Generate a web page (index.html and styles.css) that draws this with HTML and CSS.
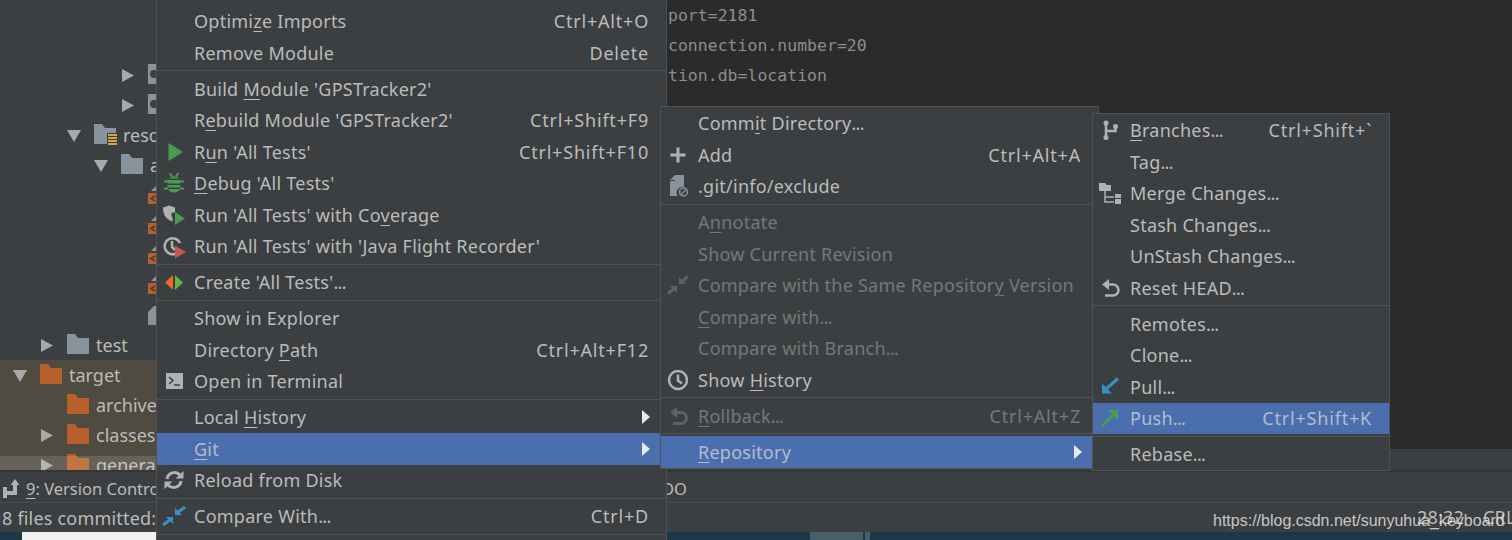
FILE: index.html
```html
<!DOCTYPE html>
<html lang="en">
<head>
<meta charset="utf-8">
<title>Git context menu</title>
<link rel="stylesheet" href="styles.css">
</head>
<body>
<div class="ide">
  <div class="main">
    <div class="tree">
      <div class="node l4"><svg class="arrow"><path d="M1 2v13l12-6.500z"/></svg><svg class="fld"><path class="pkg" d="M0 1h22v20H0z"/><circle class="hole" cx="6" cy="11" r="4"/></svg></div>
      <div class="node l4"><svg class="arrow"><path d="M1 2v13l12-6.500z"/></svg><svg class="fld"><path class="pkg" d="M0 1h22v20H0z"/><circle class="hole" cx="6" cy="11" r="4"/></svg></div>
      <div class="node l2"><svg class="arrow"><path d="M0 3h14L7 15z"/></svg><svg class="fld"><path class="blue" d="M0 1h8l3 4h11v16H0z"/><path class="edge" d="M13 10h11v13H13z"/><path class="res" d="M14 11h9v2h-9zM14 14h9v2h-9zM14 17h9v2h-9zM14 20h9v2h-9z"/></svg><span>resources</span></div>
      <div class="node l3"><svg class="arrow"><path d="M0 3h14L7 15z"/></svg><svg class="fld"><path class="blue" d="M0 1h8l3 4h11v16H0z"/></svg><span>application</span></div>
      <div class="node l5"><svg class="xml"><path class="blue" d="M3 7l6-6v6z"/><path class="orange" d="M0 9h8v11H0z"/><path class="mark" d="M7 12l-4 2.500L7 17"/></svg></div>
      <div class="node l5"><svg class="xml"><path class="blue" d="M3 7l6-6v6z"/><path class="orange" d="M0 9h8v11H0z"/><path class="mark" d="M7 12l-4 2.500L7 17"/></svg></div>
      <div class="node l5"><svg class="xml"><path class="blue" d="M3 7l6-6v6z"/><path class="orange" d="M0 9h8v11H0z"/><path class="mark" d="M7 12l-4 2.500L7 17"/></svg></div>
      <div class="node l5"><svg class="xml"><path class="blue" d="M3 7l6-6v6z"/><path class="orange" d="M0 9h8v11H0z"/><path class="mark" d="M7 12l-4 2.500L7 17"/></svg></div>
      <div class="node l5"><svg class="xml"><path class="blue" d="M0 8l6-6h4v19H0z"/></svg></div>
      <div class="node l1"><svg class="arrow"><path d="M1 2v13l12-6.500z"/></svg><svg class="fld"><path class="blue" d="M0 1h8l3 4h11v16H0z"/></svg><span>test</span></div>
      <div class="node l0 ignored"><svg class="arrow"><path d="M0 3h14L7 15z"/></svg><svg class="fld"><path class="orange" d="M0 1h8l3 4h11v16H0z"/></svg><span>target</span></div>
      <div class="node l1 ignored"><span class="arrow-gap"></span><svg class="fld"><path class="orange" d="M0 1h8l3 4h11v16H0z"/></svg><span>archive-tmp</span></div>
      <div class="node l1 ignored"><svg class="arrow"><path d="M1 2v13l12-6.500z"/></svg><svg class="fld"><path class="orange" d="M0 1h8l3 4h11v16H0z"/></svg><span>classes</span></div>
      <div class="node l1 ignored"><svg class="arrow"><path d="M1 2v13l12-6.500z"/></svg><svg class="fld"><path class="orange" d="M0 1h8l3 4h11v16H0z"/></svg><span>generated</span></div>
      <div class="fade"></div>
    </div>
    <div class="right">
      <div class="editor">
        <div class="code">port=2181</div>
        <div class="code">connection.number=20</div>
        <div class="code">tion.db=location</div>
      </div>
      <div class="editor-foot"></div>
    </div>
  </div>
  <div class="toolbar">
    <div class="tab first"><svg class="tab-icon" viewBox="0 0 18 20"><path d="M1 9h4v11H1zM5 13h6V7H8.500L13 1l4.500 6H15v10H5z"/></svg><span><u>9</u>: Version Control</span></div>
    <div class="tab"><span>6: TODO</span></div>
  </div>
  <div class="status">
    <span class="status-msg">8 files committed: update</span>
    <span class="status-pos">28:32</span>
    <span class="status-crlf">CRLF</span>
  </div>
  <div class="taskbar">
    <span class="tb-a"></span><span class="tb-white"></span><span class="tb-b"></span><span class="tb-thumb"></span><span class="tb-c"></span><span class="tb-thumb2"></span><span class="tb-d"></span>
  </div>

  <div class="menu m1">
    <div class="row"><span class="ic"></span><span class="lbl">Optimi<u>z</u>e Imports</span><span class="key">Ctrl+Alt+O</span></div>
    <div class="row"><span class="ic"></span><span class="lbl">Remove Module</span><span class="key">Delete</span></div>
    <div class="sep"></div>
    <div class="row"><span class="ic"></span><span class="lbl">Build <u>M</u>odule 'GPSTracker2'</span></div>
    <div class="row"><span class="ic"></span><span class="lbl">R<u>e</u>build Module 'GPSTracker2'</span><span class="key">Ctrl+Shift+F9</span></div>
    <div class="row"><span class="ic"><svg viewBox="0 0 20 20"><path class="g" d="M4.500 1v18L19 10z"/></svg></span><span class="lbl">R<u>u</u>n 'All Tests'</span><span class="key">Ctrl+Shift+F10</span></div>
    <div class="row"><span class="ic"><svg viewBox="0 0 20 20"><path class="g" d="M5.500 5.500C6.500 2.500 13.500 2.500 14.500 5.500zM3.500 7h13v3.500h-13zM3.500 12h13v2.500h-13zM4 16h12c-1.500 4.500-10.500 4.500-12 0z"/><path class="gs" d="M5.500 0l2.500 3.500M14.500 0L12 3.500M0 8.500h4M16 8.500h4M0 15.500h4M16 15.500h4"/></svg></span><span class="lbl"><u>D</u>ebug 'All Tests'</span></div>
    <div class="row"><span class="ic"><svg viewBox="0 0 20 20"><path class="gr" d="M-1 2.500L5 .500l6 2v5H8.500c-1.500 1-1.500 4 0 5V16.500c-6-2-9.500-6-9.500-14z"/><path class="g" d="M11 7l10 6.500L11 20z"/></svg></span><span class="lbl">Run 'All Tests' with Co<u>v</u>erage</span></div>
    <div class="row"><span class="ic"><svg viewBox="0 0 20 20"><path class="st" d="M12 17.500A8 8 0 1 1 16 7M8 5v6l3 3"/><path class="r" d="M11 9.500l11 6.500-11 6.500z"/></svg></span><span class="lbl">Run 'All Tests' with 'Java Flight Recorder'</span></div>
    <div class="sep"></div>
    <div class="row"><span class="ic"><svg viewBox="0 0 20 20"><path class="o" d="M9 3L1 10.500 9 18z"/><path class="lg" d="M11 3l8 7.500L11 18z"/></svg></span><span class="lbl">Create 'All Tests'<span class="d">...</span></span></div>
    <div class="sep"></div>
    <div class="row"><span class="ic"></span><span class="lbl">Show in Explorer</span></div>
    <div class="row"><span class="ic"></span><span class="lbl">Directory <u>P</u>ath</span><span class="key">Ctrl+Alt+F12</span></div>
    <div class="row"><span class="ic"><svg viewBox="0 0 20 20"><path class="gr" d="M2 2h17v16H2z"/><path class="dk" d="M5 6l4 3.500L5 13M10 14h6"/></svg></span><span class="lbl">Open in Terminal</span></div>
    <div class="sep"></div>
    <div class="row"><span class="ic"></span><span class="lbl">Local <u>H</u>istory</span><svg class="sub" viewBox="0 0 8 14"><path d="M0 0l8 7-8 7z"/></svg></div>
    <div class="row sel"><span class="ic"></span><span class="lbl"><u>G</u>it</span><svg class="sub" viewBox="0 0 8 14"><path d="M0 0l8 7-8 7z"/></svg></div>
    <div class="row"><span class="ic"><svg viewBox="0 0 20 20"><path class="st3" d="M3 9a7.500 7.500 0 0 1 13-4M17 11a7.500 7.500 0 0 1-13 4"/><path class="gr" d="M11.500 8.500h8V1zM8.500 11.500h-8V19z"/></svg></span><span class="lbl">Reload from Disk</span></div>
    <div class="sep"></div>
    <div class="row"><span class="ic"><svg viewBox="0 0 20 20"><path class="b" d="M11 9V2l7 7z"/><path class="bs" d="M13.500 6.500L21 1"/><path class="b" d="M9 11v7l-7-7z"/><path class="bs" d="M6.500 13.500L-1 19"/></svg></span><span class="lbl">Compare With<span class="d">...</span></span><span class="key">Ctrl+D</span></div>
    <div class="sep"></div>
  </div>

  <div class="menu m2">
    <div class="row"><span class="ic"></span><span class="lbl">Comm<u>i</u>t Directory<span class="d">...</span></span></div>
    <div class="row"><span class="ic"><svg viewBox="0 0 20 20"><path class="plus" d="M10 2.500v15M2.500 10h15"/></svg></span><span class="lbl">Add</span><span class="key">Ctrl+Alt+A</span></div>
    <div class="row"><span class="ic"><svg viewBox="0 0 20 20"><path class="fl" d="M7 -1h9v12a6 6 0 0 0-6.500 9H2V5h5zM2 4l5-5v5z"/><circle class="no" cx="15.500" cy="16" r="4"/><path class="no" d="M13 18.500l5-5"/></svg></span><span class="lbl">.git/info/exclude</span></div>
    <div class="sep"></div>
    <div class="row off"><span class="ic"></span><span class="lbl">A<u>n</u>notate</span></div>
    <div class="row off"><span class="ic"></span><span class="lbl">Show Current Revision</span></div>
    <div class="row off"><span class="ic"><svg viewBox="0 0 20 20"><path class="dg" d="M11 9V2l7 7z"/><path class="dgs" d="M13.500 6.500L20 1.500"/><path class="dg" d="M9 11v7l-7-7z"/><path class="dgs" d="M6.500 13.500L0 18.500"/></svg></span><span class="lbl">Compare with the Same Repositor<u>y</u> Version</span></div>
    <div class="row off"><span class="ic"></span><span class="lbl"><u>C</u>ompare with<span class="d">...</span></span></div>
    <div class="row off"><span class="ic"></span><span class="lbl">Compare with Branch<span class="d">...</span></span></div>
    <div class="row"><span class="ic"><svg viewBox="0 0 20 20"><circle class="st" cx="10" cy="10" r="9"/><path class="st" d="M10 4.500V10.500l4 3"/></svg></span><span class="lbl">Show <u>H</u>istory</span></div>
    <div class="sep"></div>
    <div class="row off"><span class="ic"><svg viewBox="0 0 20 20"><path class="dg" d="M2 6.500L9 1v11z"/><path class="dgs" d="M8 6.500h5a5.500 5.500 0 0 1 0 11H5"/></svg></span><span class="lbl"><u>R</u>ollback<span class="d">...</span></span><span class="key">Ctrl+Alt+Z</span></div>
    <div class="sep"></div>
    <div class="row sel"><span class="ic"></span><span class="lbl"><u>R</u>epository</span><svg class="sub" viewBox="0 0 8 14"><path d="M0 0l8 7-8 7z"/></svg></div>
  </div>

  <div class="menu m3">
    <div class="row"><span class="ic"><svg viewBox="0 0 20 20"><circle class="gr" cx="6" cy="3" r="2.500"/><circle class="gr" cx="6" cy="17.500" r="2.500"/><circle class="gr" cx="15.500" cy="6.500" r="2.500"/><path class="st" d="M6 3v14M15.500 7v4H6"/></svg></span><span class="lbl"><u>B</u>ranches<span class="d">...</span></span><span class="key">Ctrl+Shift+`</span></div>
    <div class="row"><span class="ic"></span><span class="lbl">Tag<span class="d">...</span></span></div>
    <div class="row"><span class="ic"><svg viewBox="0 0 20 20"><path class="gr" d="M-1 0h6l2 2h4v6H-1z"/><path class="thin" d="M5 8v11h9M5 14h9"/><path class="gr" d="M15 11h6v4h-6zM15 16h6v5h-6z"/></svg></span><span class="lbl">Merge Changes<span class="d">...</span></span></div>
    <div class="row"><span class="ic"></span><span class="lbl">Stash Changes<span class="d">...</span></span></div>
    <div class="row"><span class="ic"></span><span class="lbl">UnStash Changes<span class="d">...</span></span></div>
    <div class="row"><span class="ic"><svg viewBox="0 0 20 20"><path class="gr" d="M2 6.500L9 1v11z"/><path class="st" d="M8 6.500h5a5.500 5.500 0 0 1 0 11H5"/></svg></span><span class="lbl">Reset HEAD<span class="d">...</span></span></div>
    <div class="sep"></div>
    <div class="row"><span class="ic"></span><span class="lbl">Remotes<span class="d">...</span></span></div>
    <div class="row"><span class="ic"></span><span class="lbl">Clone<span class="d">...</span></span></div>
    <div class="row"><span class="ic"><svg viewBox="0 0 20 20"><path class="b" d="M2 16.500V6.500l10 10z"/><path class="bs" d="M6 12L18 1.500"/></svg></span><span class="lbl">Pull<span class="d">...</span></span></div>
    <div class="row sel"><span class="ic"><svg viewBox="0 0 20 20"><path class="g" d="M18 2v10L8 2z"/><path class="gs2" d="M14 6.500L2 18"/></svg></span><span class="lbl">Push<span class="d">...</span></span><span class="key">Ctrl+Shift+K</span></div>
    <div class="sep"></div>
    <div class="row"><span class="ic"></span><span class="lbl">Rebase<span class="d">...</span></span></div>
  </div>

  <div class="watermark">https://blog.csdn.net/sunyuhua_keyboard</div>
</div>
</body>
</html>
```

FILE: styles.css
```css
* { box-sizing: border-box; }
html, body { margin: 0; padding: 0; }
body { background: #3c3f41; overflow: hidden; }
u { text-underline-offset: 3px; text-decoration-thickness: 1px; }

.ide {
  position: relative;
  width: 1512px;
  height: 540px;
  overflow: hidden;
  display: flex;
  flex-direction: column;
  background: #3c3f41;
  color: #bbbbbb;
  font-family: "Noto Sans", "Open Sans", sans-serif;
  font-size: 18px;
}

.main { display: flex; height: 470px; flex: none; }

.tree {
  position: relative;
  width: 666px;
  flex: none;
  padding-top: 60px;
  overflow: hidden;
  background: #3c3f41;
}
.node { height: 30px; display: flex; align-items: center; white-space: nowrap; }
.l0 { padding-left: 13px; }
.l1 { padding-left: 40px; }
.l2 { padding-left: 67px; }
.l3 { padding-left: 94px; }
.l4 { padding-left: 121px; }
.l5 { padding-left: 148px; }
.ignored { background: #4f4b41; }
.arrow { width: 14px; height: 17px; margin-right: 13px; flex: none; fill: #a9a9a9; }
.arrow-gap { width: 27px; flex: none; }
.fld { width: 22px; height: 24px; margin-right: 7px; flex: none; overflow: visible; }
.xml { width: 20px; height: 22px; flex: none; }
.blue { fill: #87939d; }
.pkg { fill: #87939d; }
.hole { fill: #3c3f41; }
.edge { fill: #3c3f41; }
.orange { fill: #b8602b; }
.res { fill: #d9a343; }
.mark { fill: none; stroke: #3c3f41; stroke-width: 1.500; }
.fade {
  position: absolute;
  left: 0;
  right: 0;
  top: 456px;
  height: 14px;
  background: rgba(255, 255, 255, 0.13);
}

.right { flex: 1; display: flex; flex-direction: column; min-width: 0; }
.editor { height: 449px; background: #2b2b2b; flex: none; padding-top: 1px; }
.editor-foot { flex: 1; background: #3c3f41; }
.code {
  height: 30px;
  line-height: 30px;
  padding-left: 2px;
  font-family: "DejaVu Sans Mono", monospace;
  font-size: 16.500px;
  color: #8d8d8d;
  white-space: nowrap;
}

.toolbar {
  height: 33px;
  flex: none;
  display: flex;
  align-items: center;
  padding-top: 2px;
  border-top: 2px solid #333537;
  border-bottom: 1px solid #4a4c4e;
  white-space: nowrap;
  font-size: 16.500px;
}
.tab { display: flex; align-items: center; }
.first { width: 622px; padding-left: 2px; }
.tab-icon { width: 18px; height: 20px; margin-right: 6px; fill: #afb1b3; }

.status {
  height: 29px;
  flex: none;
  display: flex;
  align-items: center;
  white-space: nowrap;
  padding-left: 2px;
  letter-spacing: 0.200px;
}
.status-msg { width: 1415px; flex: none; }
.status-pos { width: 66px; flex: none; position: relative; top: -1px; }
.status-crlf { flex: none; position: relative; top: -1px; }

.taskbar { flex: 1; display: flex; background: #1e3747; }
.taskbar span { display: block; flex: none; }
.tb-a { width: 22px; }
.tb-white { width: 134px; background: #f2f2f2; }
.tb-b { width: 654px; }
.tb-thumb { width: 53px; background: #4a5d69; }
.tb-c { width: 2px; }
.tb-thumb2 { width: 5px; background: #4a5d69; }

.menu {
  position: absolute;
  display: flex;
  flex-direction: column;
  background: #3c3f41;
  border: 1px solid #515151;
  white-space: nowrap;
  letter-spacing: 0.250px;
}
.m1 { left: 156px; top: -1px; width: 511px; height: 560px; padding-top: 6.500px; border-top: 0; }
.m2 { left: 660px; top: 106px; width: 439px; height: 363px; padding-top: 0.500px; }
.m3 { left: 1092px; top: 113px; width: 298px; height: 358px; padding-top: 0.500px; }

.row {
  height: 31.500px;
  flex: none;
  display: flex;
  align-items: center;
  padding: 0 17px 0 7px;
}
.ic { width: 20px; height: 20px; margin-right: 10px; flex: none; }
.ic svg { display: block; width: 20px; height: 20px; overflow: visible; }
.lbl { flex: 1; }
.d { letter-spacing: -0.700px; }
.key { letter-spacing: 0.800px; }
.sub { width: 8px; height: 14px; fill: #e8e8e8; margin-right: -1px; }
.sel { background: #4b6eaf; color: #b3bccb; }
.off { color: #777777; }
.off .key { color: #777777; }
.sep { height: 4.500px; flex: none; padding-top: 1.500px; }
.sep::before { content: ""; display: block; height: 1px; background: #515151; }

.g { fill: #499c54; }
.gs { fill: none; stroke: #499c54; stroke-width: 2; }
.gs2 { fill: none; stroke: #499c54; stroke-width: 3; }
.gr { fill: #afb1b3; }
.st { fill: none; stroke: #afb1b3; stroke-width: 2.500; }
.st3 { fill: none; stroke: #afb1b3; stroke-width: 3; }
.thin { fill: none; stroke: #afb1b3; stroke-width: 1.500; }
.r { fill: #c75450; }
.o { fill: #f26522; }
.lg { fill: #62b543; }
.dk { fill: none; stroke: #3c3f41; stroke-width: 1.500; }
.b { fill: #3592c4; }
.bs { fill: none; stroke: #3592c4; stroke-width: 3; }
.dg { fill: #5f6162; }
.dgs { fill: none; stroke: #5f6162; stroke-width: 3; }
.plus { fill: none; stroke: #afb1b3; stroke-width: 3; }
.fl { fill: #87939d; }
.no { fill: none; stroke: #87939d; stroke-width: 1.500; }

.watermark {
  position: absolute;
  left: 1213px;
  top: 511px;
  font-family: "Liberation Sans", Arial, sans-serif;
  font-size: 16px;
  line-height: 20px;
  color: rgba(225, 225, 225, 0.85);
  white-space: nowrap;
}
```
